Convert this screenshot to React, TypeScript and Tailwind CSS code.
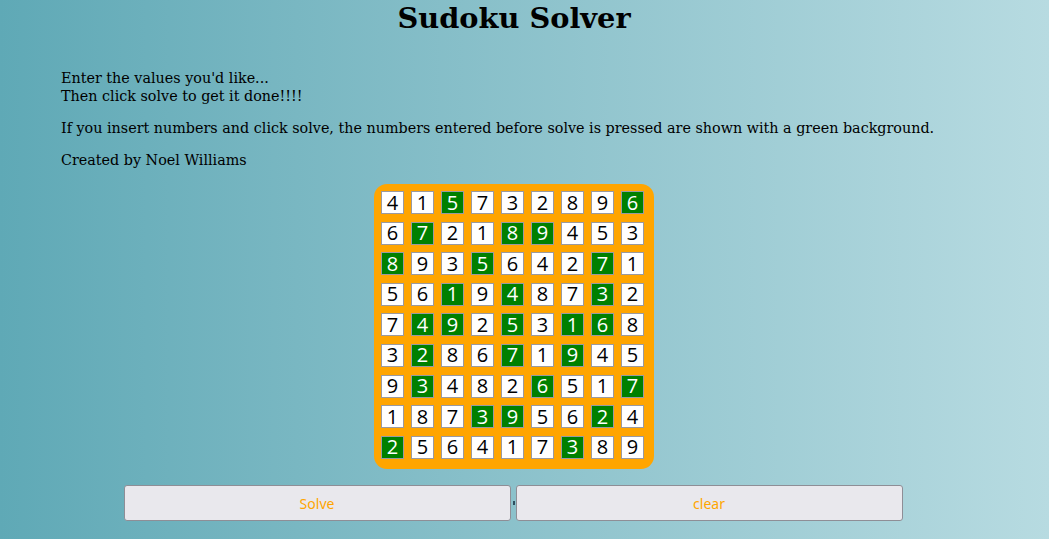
import React from 'react';

const solved = [
  [4, 1, 5, 7, 3, 2, 8, 9, 6],
  [6, 7, 2, 1, 8, 9, 4, 5, 3],
  [8, 9, 3, 5, 6, 4, 2, 7, 1],
  [5, 6, 1, 9, 4, 8, 7, 3, 2],
  [7, 4, 9, 2, 5, 3, 1, 6, 8],
  [3, 2, 8, 6, 7, 1, 9, 4, 5],
  [9, 3, 4, 8, 2, 6, 5, 1, 7],
  [1, 8, 7, 3, 9, 5, 6, 2, 4],
  [2, 5, 6, 4, 1, 7, 3, 8, 9],
];

// cells the user typed before pressing solve
const given = [
  [0, 0, 1, 0, 0, 0, 0, 0, 1],
  [0, 1, 0, 0, 1, 1, 0, 0, 0],
  [1, 0, 0, 1, 0, 0, 0, 1, 0],
  [0, 0, 1, 0, 1, 0, 0, 1, 0],
  [0, 1, 1, 0, 1, 0, 1, 1, 0],
  [0, 1, 0, 0, 1, 0, 1, 0, 0],
  [0, 1, 0, 0, 0, 1, 0, 0, 1],
  [0, 0, 0, 1, 1, 0, 0, 1, 0],
  [1, 0, 0, 0, 0, 0, 1, 0, 0],
];

const Cell: React.FC<{ value: number; entered: boolean }> = ({ value, entered }) => (
  <div
    className={
      entered
        ? 'w-[23px] h-[23px] flex items-center justify-center border border-[#9a9aa0] bg-[#008000] text-white text-[20px] leading-none'
        : 'w-[23px] h-[23px] flex items-center justify-center border border-[#9a9aa0] bg-white text-black text-[20px] leading-none'
    }
  >
    {value}
  </div>
);

const App: React.FC = () => {
  return (
    <div className="min-h-screen w-full bg-gradient-to-r from-[#5fa9b6] to-[#b7dbe1] font-['DejaVu_Serif',serif] text-black">
      <div className="w-[1028px]">
        <h1 className="text-center text-[28.8px] font-bold leading-[37px]">Sudoku Solver</h1>
        <div className="pl-[61px] pt-[32px] text-[14.33px] leading-[18px]">
          <p>
            Enter the values you'd like...
            <br />
            Then click solve to get it done!!!!
          </p>
          <p className="mt-[14px]">
            If you insert numbers and click solve, the numbers entered before solve is pressed are shown with a green background.
          </p>
          <p className="mt-[14px]">Created by Noel Williams</p>
        </div>
        <div className="flex justify-center mt-[15px]">
          <div className="w-[280px] h-[285px] bg-[#ffa500] rounded-[13px] pt-[7px] pl-[7px] font-['Open_Sans',sans-serif]">
            <div className="grid grid-cols-[repeat(9,23px)] gap-x-[7px] gap-y-[7.6px]">
              {solved.map((row, r) =>
                row.map((v, c) => <Cell key={`${r}-${c}`} value={v} entered={given[r][c] === 1} />)
              )}
            </div>
          </div>
        </div>
        <div className="flex justify-center items-center mt-[16px] pr-[2px] font-['Noto_Sans',sans-serif]">
          <button className="w-[387px] h-[36px] bg-[#e9e8ed] border border-[#8e8e96] rounded-[3px] text-[#ffa500] text-[14px]">
            Solve
          </button>
          <span className="w-[2px] h-[4px] bg-[#2f4f5f] ml-[2px] mr-[1px]" />
          <button className="w-[387px] h-[36px] bg-[#e9e8ed] border border-[#8e8e96] rounded-[3px] text-[#ffa500] text-[14px]">
            clear
          </button>
        </div>
      </div>
    </div>
  );
};

export default App;
